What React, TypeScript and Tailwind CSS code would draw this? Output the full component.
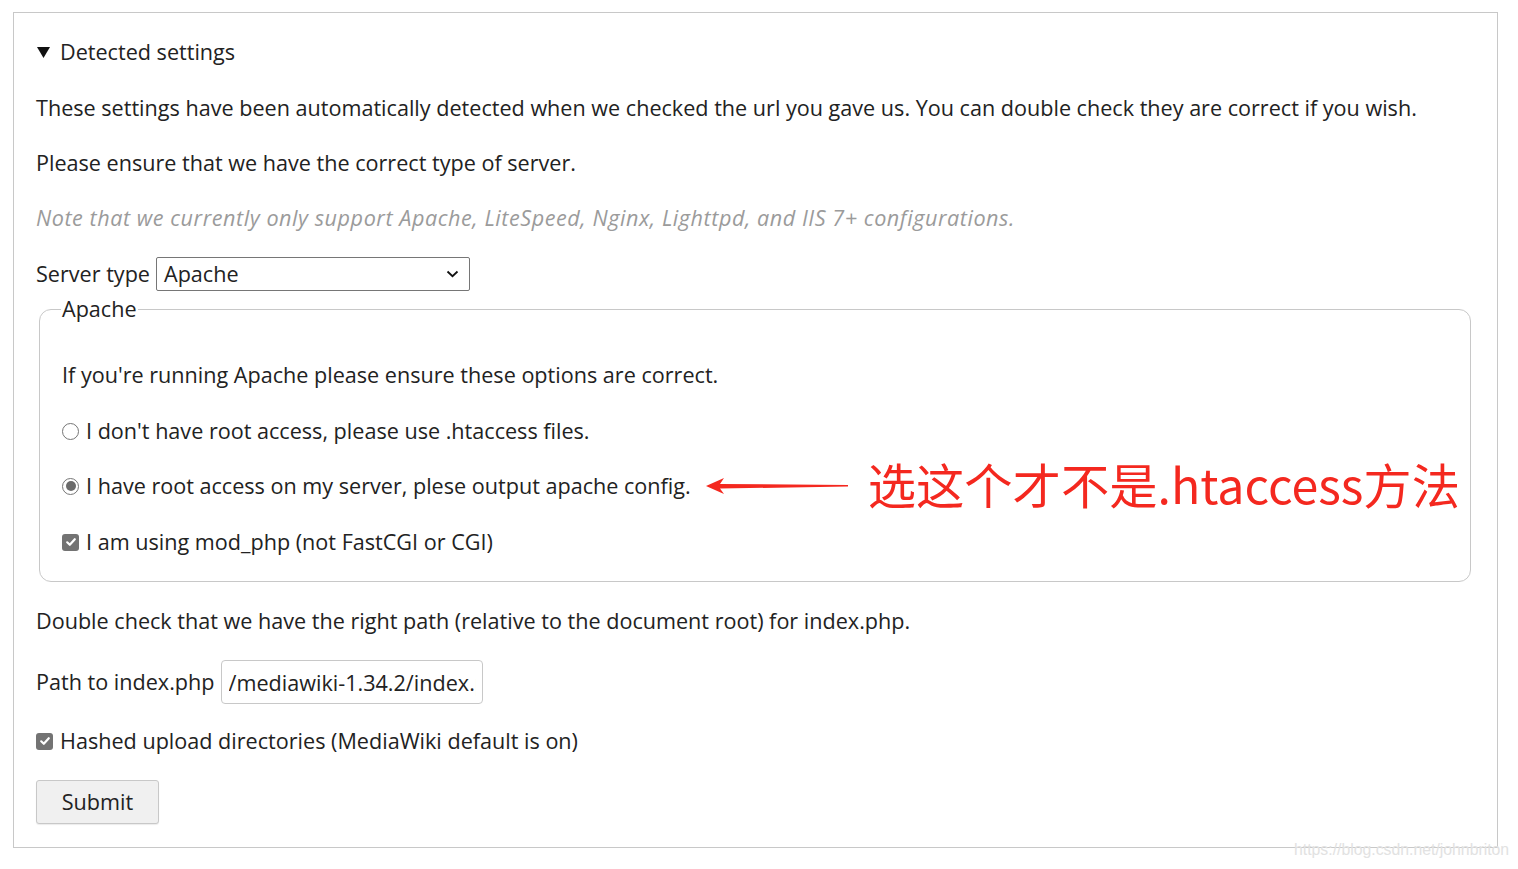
import React from 'react';

const CheckBox: React.FC = () => (
  <span className="w-[17px] h-[17px] rounded-[3px] bg-[#737373] flex items-center justify-center shrink-0">
    <svg width="12" height="12" viewBox="0 0 12 12">
      <path d="M2.2 6.3 L4.8 8.8 L9.8 3.2" fill="none" stroke="#fff" strokeWidth="2.2" strokeLinecap="round" strokeLinejoin="round" />
    </svg>
  </span>
);

const Radio: React.FC<{ checked?: boolean }> = ({ checked }) => (
  <span className="w-[17px] h-[17px] rounded-full border border-[#767676] bg-white flex items-center justify-center shrink-0">
    {checked && <span className="w-[10px] h-[10px] rounded-full bg-[#6b6b6b]"></span>}
  </span>
);

const App: React.FC = () => {
  return (
    <div className="min-h-screen bg-white relative font-['Open_Sans',sans-serif] text-[#222] text-[21.6px] leading-[28px]">
      <div className="pt-[12px] pl-[13px]">
        <div className="w-[1485px] h-[836px] border border-[#c8c8c8] px-[22px] pt-[25px] flex flex-col">
          <div className="flex items-center gap-[10px]">
            <svg width="13" height="11" viewBox="0 0 13 11" className="shrink-0 ml-[1px]">
              <polygon points="0,0 13,0 6.5,11" fill="#111" />
            </svg>
            <span>Detected settings</span>
          </div>

          <p className="mt-[28px] whitespace-nowrap">
            These settings have been automatically detected when we checked the url you gave us. You can double check they are correct if you wish.
          </p>
          <p className="mt-[27px]">Please ensure that we have the correct type of server.</p>
          <p className="mt-[27px] italic text-[#9b9b9b] tracking-[0.55px] whitespace-nowrap">
            Note that we currently only support Apache, LiteSpeed, Nginx, Lighttpd, and IIS 7+ configurations.
          </p>

          <div className="mt-[25px] flex items-center gap-[6px] h-[34px]">
            <span>Server type</span>
            <div className="w-[314px] h-[34px] border border-[#767676] rounded-[2px] flex items-center justify-between pl-[7px] pr-[10px]">
              <span>Apache</span>
              <svg width="13" height="8" viewBox="0 0 13 8">
                <path d="M1.5 1.5 L6.5 6.2 L11.5 1.5" fill="none" stroke="#111" strokeWidth="1.8" />
              </svg>
            </div>
          </div>

          <fieldset className="mt-[4px] ml-[3px] mr-[4px] min-w-0 border border-[#c8c8c8] rounded-[12px] px-[22px] pb-[25px]">
            <legend className="px-[1px] ml-[-1px]">Apache</legend>
            <p className="mt-[38px]">If you're running Apache please ensure these options are correct.</p>
            <div className="mt-[28px] flex items-center gap-[7px] h-[28px]">
              <Radio />
              <span>I don't have root access, please use .htaccess files.</span>
            </div>
            <div className="mt-[27px] flex items-center h-[28px]">
              <Radio checked />
              <span className="ml-[7px] whitespace-nowrap">I have root access on my server, plese output apache config.</span>
              <svg width="143" height="18" viewBox="0 0 143 18" className="ml-[15px] shrink-0">
                <polygon points="0,9 18,1 14,7 142,8 142,9.6 14,11.5 18,17" fill="#f4281f" />
              </svg>
              <span className="ml-[19px] mb-[6px] text-[48.3px] leading-[28px] text-[#f4281f] font-['Microsoft_YaHei','Noto_Sans_CJK_SC',sans-serif] whitespace-nowrap">
                选这个才不是.htaccess方法
              </span>
            </div>
            <div className="mt-[28px] flex items-center gap-[7px] h-[28px]">
              <CheckBox />
              <span>I am using mod_php (not FastCGI or CGI)</span>
            </div>
          </fieldset>

          <p className="mt-[25px]">Double check that we have the right path (relative to the document root) for index.php.</p>

          <div className="mt-[25px] flex items-center gap-[6px] h-[44px]">
            <span>Path to index.php</span>
            <input
              readOnly
              value="/mediawiki-1.34.2/index.php"
              className="w-[262px] h-[44px] border border-[#c8c8c8] rounded-[4px] pl-[7px] pr-[6px] text-[#222] outline-none"
            />
          </div>

          <div className="mt-[23px] flex items-center gap-[7px] h-[28px]">
            <CheckBox />
            <span>Hashed upload directories (MediaWiki default is on)</span>
          </div>

          <div className="mt-[25px]">
            <button className="w-[123px] h-[44px] border border-[#c8c8c8] rounded-[3px] bg-[#f0f0f0] text-[#222] shadow-[0_1px_1px_rgba(0,0,0,0.08)]">
              Submit
            </button>
          </div>
        </div>
      </div>

      <span className="absolute left-[1294px] top-[840px] text-[15.8px] leading-[20px] text-[#e2e2e2] font-['Liberation_Sans',sans-serif]">
        https://blog.csdn.net/johnbriton
      </span>
    </div>
  );
};

export default App;
